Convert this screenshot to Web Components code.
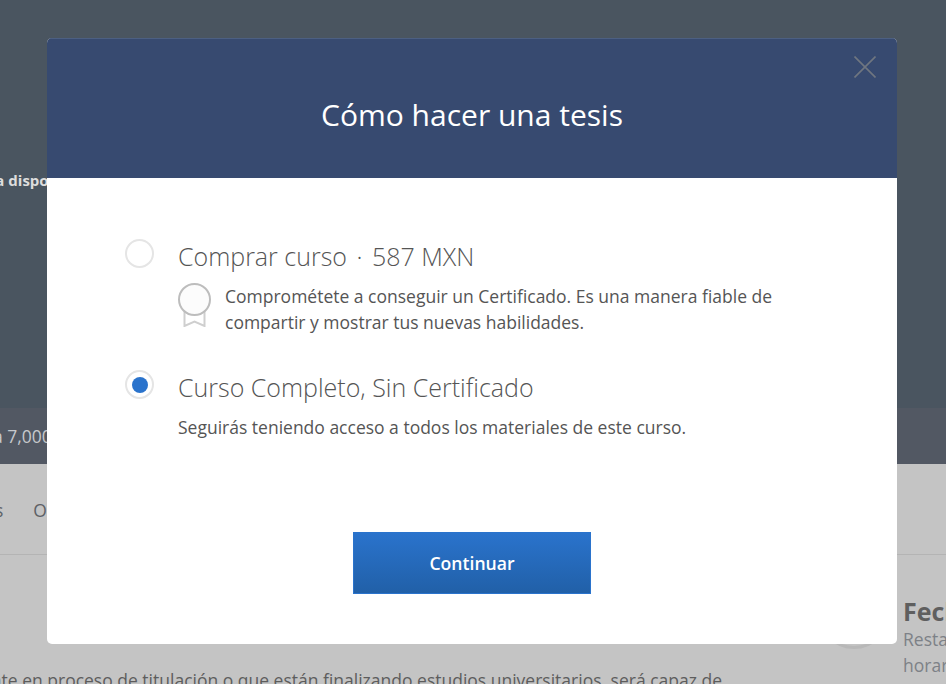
<!DOCTYPE html>
<html lang="es">
<head>
<meta charset="utf-8">
<title>Cómo hacer una tesis</title>
<style>
html, body { margin: 0; height: 100%; }
body { font-family: "Open Sans", "Liberation Sans", sans-serif; overflow: hidden; }
.dot { margin: 0 3px; }
</style>
</head>
<body>
<course-backdrop></course-backdrop>
<enroll-modal heading="Cómo hacer una tesis">
  <enroll-option medal>
    <span slot="label">Comprar curso <span class="dot">·</span> 587 MXN</span>
    Comprométete a conseguir un Certificado. Es una manera fiable de compartir y mostrar tus nuevas habilidades.
  </enroll-option>
  <enroll-option checked>
    <span slot="label">Curso Completo, Sin Certificado</span>
    Seguirás teniendo acceso a todos los materiales de este curso.
  </enroll-option>
</enroll-modal>
<script>
class CourseBackdrop extends HTMLElement {
  constructor () {
    super();
    this.attachShadow({ mode: 'open' });
    this.shadowRoot.innerHTML = `<style>
:host { display: block; height: 684px; overflow: hidden; background: #c4c4c4; }
.hero { background: #4a5560; height: 408px; box-sizing: border-box; padding-top: 170px; color: #ddd; font-size: 15px; font-weight: 700; line-height: 20px; }
.hero span { display: block; margin-left: -14px; white-space: nowrap; }
.strip { background: #525863; height: 56px; color: #c6c8cc; font-size: 17.500px; line-height: 56px; white-space: nowrap; }
.strip span { display: block; margin-left: -7px; }
.tabs { height: 91px; box-sizing: border-box; border-bottom: 1px solid #b4b4b4; display: flex; gap: 30px; padding-top: 33px; margin-left: -5px; color: #5d6166; font-size: 17.500px; line-height: 26px; }
.body { display: flex; justify-content: flex-end; gap: 13px; padding-top: 41px; }
.ring { width: 72px; height: 72px; box-sizing: border-box; margin-top: -19px; border: 3px solid #b8b8b8; border-radius: 50%; }
.aside { width: 43px; overflow: hidden; white-space: nowrap; color: #7d8187; font-size: 17.500px; line-height: 26px; }
.aside b { display: block; color: #5f5f5f; font-size: 25px; line-height: 30px; }
.intro { margin: 0; position: absolute; top: 668px; left: -19px; color: #5d5d5d; font-size: 17.500px; line-height: 24px; white-space: nowrap; }
</style>
<div class="hero"><span>Ya disponible</span></div>
<div class="strip"><span>a 7,000</span></div>
<div class="tabs"><span>s</span><span>O</span></div>
<div class="body"><div class="ring"></div><div class="aside"><b>Fecha</b>Resta<br>horar</div></div>
<p class="intro">ente en proceso de titulación o que están finalizando estudios universitarios, será capaz de</p>`;
  }
}

class EnrollModal extends HTMLElement {
  constructor () {
    super();
    this.attachShadow({ mode: 'open' });
    this.shadowRoot.innerHTML = `<style>
:host { position: absolute; left: 47px; top: 38px; width: 850px; height: 606px; background: #fff; border-radius: 5px; overflow: hidden; display: flex; flex-direction: column; }
header { height: 140px; box-sizing: border-box; border-top: 1px solid #4c5f82; background: #374a70; display: flex; align-items: center; justify-content: center; position: relative; flex: none; }
h1 { margin: 0; color: #fff; font-size: 30px; font-weight: 400; line-height: 40px; padding-top: 13px; }
.close { position: absolute; right: 21px; top: 17px; width: 22px; height: 22px; display: block; }
.options { flex: 1; padding: 60px 78px 0; display: flex; flex-direction: column; gap: 34px; }
.actions { display: flex; justify-content: center; padding-bottom: 50px; }
button { width: 238px; height: 62px; box-sizing: border-box; border: 1px solid #2a73cc; padding: 0; color: #fff; font: 600 17.600px "Open Sans", "Liberation Sans", sans-serif; background: linear-gradient(#2a73cc, #2160a8); }
</style>
<header>
  <h1></h1>
  <svg class="close" viewBox="0 0 22 22" fill="none" stroke="#6f7680" stroke-width="1.6"><path d="M.5.5l21 21M21.5.5l-21 21"/></svg>
</header>
<div class="options"><slot></slot></div>
<div class="actions"><button>Continuar</button></div>`;
    this.shadowRoot.querySelector('h1').textContent = this.getAttribute('heading');
  }
}

class EnrollOption extends HTMLElement {
  constructor () {
    super();
    this.attachShadow({ mode: 'open' });
    this.shadowRoot.innerHTML = `<style>
:host { display: grid; grid-template-columns: 29px 1fr; column-gap: 24px; color: #555; }
.radio { width: 29px; height: 29px; box-sizing: border-box; margin-top: 1px; border: 2px solid #e5e5e5; border-radius: 50%; display: flex; align-items: center; justify-content: center; }
.radio i { width: 16px; height: 16px; border-radius: 50%; background: #2a73cc; display: none; }
:host([checked]) .radio i { display: block; }
.label { color: #555; font-size: 25px; font-weight: 300; line-height: 36px; margin-bottom: 9px; white-space: nowrap; }
.desc { display: flex; gap: 14px; font-size: 17.500px; line-height: 26px; width: 620px; }
.medal { flex: none; width: 33px; height: 44px; display: none; }
:host([medal]) .medal { display: block; }
:host([medal]) .text { width: 570px; }
</style>
<div class="radio"><i></i></div>
<div>
  <div class="label"><slot name="label"></slot></div>
  <div class="desc">
    <svg class="medal" viewBox="0 0 33 44" fill="none"><path stroke="#cfcfcf" stroke-width="2" d="M6.500 28v15l10-4.500 10 4.500V28"/><circle cx="16.500" cy="16.500" r="15.500" fill="#fcfcfc" stroke="#bdbdbd" stroke-width="2"/></svg>
    <div class="text"><slot></slot></div>
  </div>
</div>`;
  }
}

customElements.define('course-backdrop', CourseBackdrop);
customElements.define('enroll-modal', EnrollModal);
customElements.define('enroll-option', EnrollOption);
</script>
</body>
</html>
